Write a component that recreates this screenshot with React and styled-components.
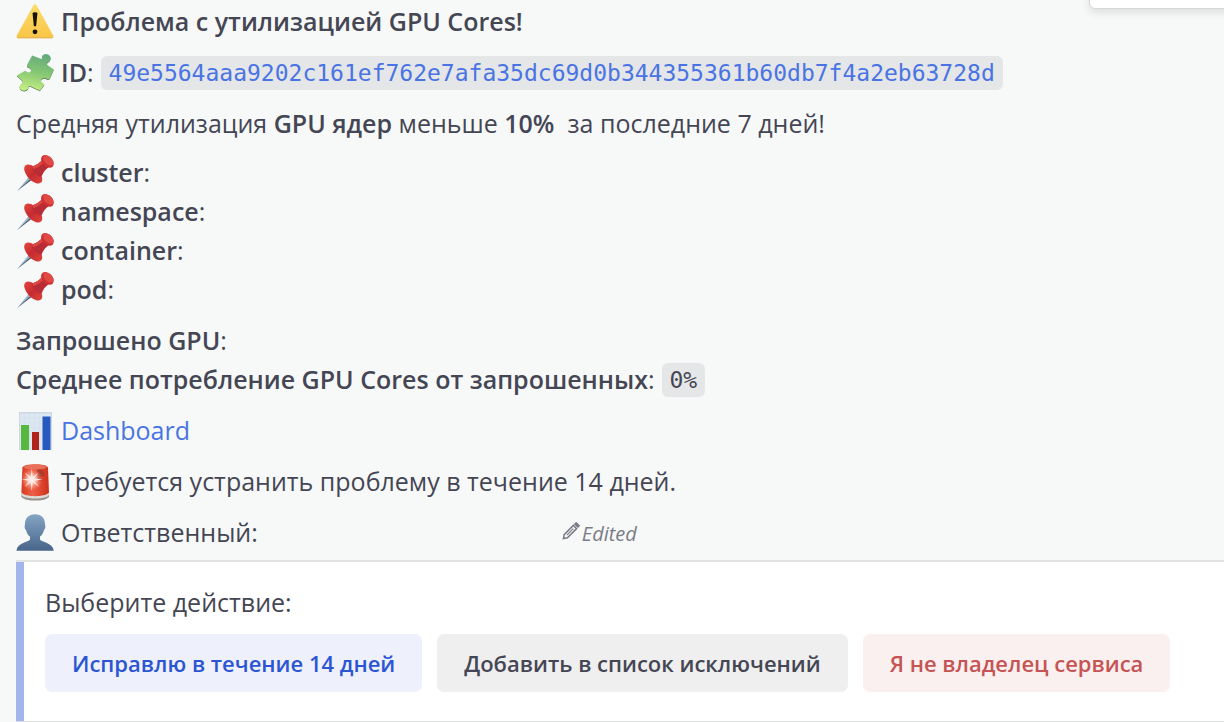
import React from 'react';
import styled, { createGlobalStyle } from 'styled-components';

const GlobalStyles = createGlobalStyle`
  * {
    margin: 0;
    padding: 0;
    box-sizing: border-box;
  }

  body {
    background-color: #f7f9f9;
    color: #454654;
    font-family: 'Open Sans', sans-serif;
    font-size: 25px;
    line-height: 39px;
  }
`;

const Post = styled.main`
  position: relative;
  min-height: 100vh;
  padding: 2px 0 0 16px;
  overflow: hidden;
`;

const HoverMenu = styled.div`
  position: absolute;
  top: -40px;
  right: -20px;
  width: 155px;
  height: 49px;
  background-color: #ffffff;
  border: 1px solid #d6d8d9;
  border-radius: 6px;
  box-shadow: 0 4px 8px rgba(0, 0, 0, 0.1);
`;

const Message = styled.div`
  display: flex;
  flex-direction: column;
  gap: 12px;
  margin-bottom: 8px;
`;

const Line = styled.p`
  display: flex;
  align-items: center;
  white-space: pre;
`;

const Labels = styled.div`
  margin-top: -2px;
`;

const Title = styled(Line).attrs({ as: 'h1' })`
  font-size: 25px;
  font-weight: 600;
`;

const Bold = styled.strong`
  font-weight: 600;
`;

const Icon = styled.svg`
  flex: none;
  width: 38px;
  height: 38px;
  margin-right: 7px;
`;

const Code = styled.code`
  padding: 0 8px;
  margin-left: 7px;
  border-radius: 6px;
  background-color: #e4e6e7;
  color: ${({ $link }) => ($link ? '#4a74e4' : '#454654')};
  font-family: 'DejaVu Sans Mono', monospace;
  font-size: 23px;
  line-height: 34px;
`;

const TextLink = styled.a`
  color: #4a74e4;
  text-decoration: none;
`;

const Edited = styled.span`
  display: flex;
  align-items: center;
  gap: 2px;
  margin-left: 304px;
  padding-top: 2px;
  color: #7b7c86;
  font-size: 20px;
  font-style: italic;
  line-height: 37px;
`;

const Pencil = styled.svg`
  width: 18px;
  height: 18px;
  margin-bottom: 5px;
`;

const Attachment = styled.section`
  border-top: 2px solid #e1e3e3;
  border-bottom: 1px solid #dcdddd;
  background-color: #ffffff;
`;

const AttachmentBody = styled.div`
  padding: 21px 21px 29px;
  border-left: 8px solid #a2b6ec;
`;

const Actions = styled.div`
  display: flex;
  gap: 15px;
  margin-top: 12px;
`;

const tones = {
  primary: { color: '#2c55d3', background: '#eef1fb' },
  plain: { color: '#454654', background: '#efefef' },
  danger: { color: '#c65454', background: '#faf0f0' },
};

const ActionButton = styled.button`
  height: 58px;
  padding: 0 27px;
  border: none;
  border-radius: 7px;
  background-color: ${({ $tone }) => tones[$tone].background};
  color: ${({ $tone }) => tones[$tone].color};
  font-family: inherit;
  font-size: 22px;
  font-weight: 600;
  white-space: nowrap;
  cursor: pointer;
`;

const WarningIcon = () => (
  <Icon viewBox="0 0 38 38" aria-hidden="true">
    <defs>
      <linearGradient id="warn" x1="0" y1="0" x2="0" y2="1">
        <stop offset="0" stopColor="#fbdc6a" />
        <stop offset="1" stopColor="#f9c646" />
      </linearGradient>
    </defs>
    <path d="M17.3 2.4Q19 0.2 20.7 2.4L37.2 32.4Q38 35.2 35.4 35.2H2.6Q0 35.2 0.8 32.4Z" fill="url(#warn)" />
    <path d="M0.9 34Q1.3 35.2 2.6 35.2H35.4Q36.7 35.2 37.1 34Z" fill="#eab453" />
    <path d="M16.6 10.4Q16.6 9.2 19 9.2T21.4 10.4L20.2 22.8Q19 24.4 17.8 22.8Z" fill="#171308" />
    <circle cx="19" cy="28.8" r="2.4" fill="#171308" />
  </Icon>
);

const puzzlePath =
  'M0.8 21.4L7.8 17.4C9.4 16.4 10.2 17.2 11.2 18C13 19.4 15.8 17.6 15 15.2C14.4 13.4 13 13.6 11.8 13C10.6 12.2 11 10.8 11.8 9.4L16.2 1.6L24 4.6C26.2 5.4 26.2 4.2 26 2.8C26.6 -0.8 33 -1 34.4 3C35.2 6.2 32.8 7.6 31.2 8.6C30.2 9.6 31 10.6 32 11.4L37.8 15.4L34 24C33.2 25.6 31.8 25.6 30.6 24.6C28.2 22.8 24.6 24.6 25 27.2C25.4 28.8 26.6 28.8 27.6 29.4C28.6 30.2 28.2 31 27.6 31.8L23.8 36.4L15 32.4C13.4 31.6 12.4 32 12.4 33.6C11.8 37.4 5.2 37.8 3.8 34C3 31.2 5 29.8 6.2 29C7.2 28.2 6.8 27.2 6 26.2Z';

const PuzzleIcon = () => (
  <Icon viewBox="0 0 38 38" aria-hidden="true">
    <defs>
      <linearGradient id="puzzle" x1="0.6" y1="0" x2="0.4" y2="1">
        <stop offset="0" stopColor="#63ab7b" />
        <stop offset="0.5" stopColor="#86c774" />
        <stop offset="1" stopColor="#c3ee82" />
      </linearGradient>
    </defs>
    <path d={puzzlePath} fill="#5f7d58" transform="translate(0 0.8)" />
    <path d={puzzlePath} fill="url(#puzzle)" />
  </Icon>
);

const PinIcon = () => (
  <Icon viewBox="0 0 38 38" aria-hidden="true">
    <defs>
      <linearGradient id="pin" x1="0" y1="0" x2="0" y2="1">
        <stop offset="0" stopColor="#e2433e" />
        <stop offset="0.5" stopColor="#c52c30" />
        <stop offset="1" stopColor="#dc4039" />
      </linearGradient>
    </defs>
    <path d="M1.2 37L12.2 23.4L15 26.2Z" fill="#9db6cd" />
    <path d="M1.2 37L14 25.2L15 26.2Z" fill="#4b5763" />
    <ellipse cx="17.2" cy="20" rx="6.2" ry="11.6" transform="rotate(-42 17.2 20)" fill="url(#pin)" />
    <path d="M15.6 12.6C20 11.4 23.4 9 26.6 5.4L33.6 12.6C29.4 15.4 27 18.6 25.6 22.6C21.6 22.8 15.6 17 15.6 12.6Z" fill="#b92c36" />
    <path d="M15.8 12.6C20 11.4 23.4 9 26.6 5.4L29 7.8C25.4 11 22 13.6 17.6 15.2Z" fill="#dc4742" />
    <ellipse cx="31.4" cy="7.4" rx="5" ry="7.4" transform="rotate(-45 31.4 7.4)" fill="#cf3133" />
    <ellipse cx="32.4" cy="6.4" rx="3.8" ry="6.2" transform="rotate(-45 32.4 6.4)" fill="#e04a45" />
  </Icon>
);

const ChartIcon = () => (
  <Icon viewBox="0 0 38 38" aria-hidden="true">
    <rect x="3" y="0" width="33" height="38" fill="#cfd8e2" />
    <rect x="4" y="1.5" width="31" height="36.5" fill="#dce7f2" />
    <path d="M8.5 1V38M13.5 1V38M18.5 1V38M23.5 1V38M28.5 1V38M4 6H35M4 11H35M4 16H35M4 21H35M4 26H35" stroke="#d0dcea" strokeWidth="0.5" />
    <rect x="5" y="13" width="8" height="25" fill="#55b93e" />
    <rect x="16" y="20" width="7" height="18" fill="#b2241b" />
    <rect x="26.5" y="4.5" width="8" height="33.5" fill="#265abf" />
  </Icon>
);

const SirenIcon = () => (
  <Icon viewBox="0 0 38 38" aria-hidden="true">
    <defs>
      <linearGradient id="siren" x1="0" y1="0" x2="1" y2="0">
        <stop offset="0" stopColor="#d63a22" />
        <stop offset="0.4" stopColor="#ee5f46" />
        <stop offset="1" stopColor="#cf2f1b" />
      </linearGradient>
      <radialGradient id="flare">
        <stop offset="0" stopColor="#ffffff" />
        <stop offset="0.35" stopColor="#ffd8cd" stopOpacity="0.8" />
        <stop offset="1" stopColor="#ff8b70" stopOpacity="0" />
      </radialGradient>
    </defs>
    <path d="M5.4 30H33V33.4C31 39 7.4 39 5.4 33.4Z" fill="#96938d" />
    <path d="M5.4 30H33V31.8C31 36.8 7.4 36.8 5.4 31.8Z" fill="#dddbd5" />
    <path d="M6.4 4.6C7 0 31.4 0 32 4.6L33 29.6C30 34.4 8.4 34.4 5.4 29.6Z" fill="url(#siren)" />
    <ellipse cx="19.2" cy="4" rx="11.6" ry="2.6" fill="#e86f59" />
    <path d="M21 7C26 5.5 29 8 28.5 12.6L24 14.5L27 17L22 19Z" fill="#b03a2b" />
    <circle cx="15.8" cy="16.6" r="11" fill="url(#flare)" />
    <path d="M15.8 5.6L16.8 14L22.6 9.6L18.2 15.6L27 16.6L18.2 17.8L23.4 24L16.8 19.2L15.8 28L14.6 19.2L8.6 24L13.2 17.8L5.6 16.6L13.2 15.4L8.6 9.2L14.6 14Z" fill="#ffeee9" fillOpacity="0.9" />
  </Icon>
);

const PersonIcon = () => (
  <Icon viewBox="0 0 38 38" aria-hidden="true">
    <defs>
      <linearGradient id="person" x1="0" y1="0" x2="0" y2="1">
        <stop offset="0" stopColor="#85a5c4" />
        <stop offset="1" stopColor="#48658a" />
      </linearGradient>
    </defs>
    <path d="M19 0.2C25.6 0.2 29.4 4.6 29 11C29.8 11.6 29.4 15 28 16C27.4 19 25.8 21.2 24 22.6V25.6C25.6 28.6 36.4 28.2 37.8 36.8H0.4C1.8 28.2 12.4 28.6 14 25.6V22.6C12.2 21.2 10.6 19 10 16C8.6 15 8.2 11.6 9 11C8.6 4.6 12.4 0.2 19 0.2Z" fill="url(#person)" />
  </Icon>
);

const labels = ['cluster', 'namespace', 'container', 'pod'];

const App = () => {
  return (
    <>
      <GlobalStyles />
      <Post>
        <HoverMenu />
        <Message>
          <Title>
            <WarningIcon />
            Проблема с утилизацией GPU Cores!
          </Title>
          <Line>
            <PuzzleIcon />
            <Bold>ID</Bold>:
            <Code $link>49e5564aaa9202c161ef762e7afa35dc69d0b344355361b60db7f4a2eb63728d</Code>
          </Line>
          <Line>
            Средняя утилизация <Bold>GPU ядер</Bold> меньше <Bold>10%</Bold>
            {'  за последние 7 дней!'}
          </Line>
          <Labels>
            {labels.map((label) => (
              <Line key={label}>
                <PinIcon />
                <Bold>{label}</Bold>:
              </Line>
            ))}
          </Labels>
          <div>
            <Line>
              <Bold>Запрошено GPU</Bold>:
            </Line>
            <Line>
              <Bold>Среднее потребление GPU Cores от запрошенных</Bold>:
              <Code>0%</Code>
            </Line>
          </div>
          <Line>
            <ChartIcon />
            <TextLink href="#dashboard">Dashboard</TextLink>
          </Line>
          <Line>
            <SirenIcon />
            Требуется устранить проблему в течение 14 дней.
          </Line>
          <Line>
            <PersonIcon />
            Ответственный:
            <Edited>
              <Pencil viewBox="0 0 20 20" fill="none" stroke="#7b7c86" strokeWidth="1.7" aria-hidden="true">
                <path d="M1.6 18.4L2.4 14L12.6 3.8L16.2 7.4L6 17.6Z" />
                <path d="M5.4 14.6L12.6 7.4" strokeWidth="1.2" />
                <path d="M14.4 2.4L15.8 1L19 4.2L17.6 5.6Z" fill="#7b7c86" />
              </Pencil>
              Edited
            </Edited>
          </Line>
        </Message>
        <Attachment>
          <AttachmentBody>
            <p>Выберите действие:</p>
            <Actions>
              <ActionButton type="button" $tone="primary">Исправлю в течение 14 дней</ActionButton>
              <ActionButton type="button" $tone="plain">Добавить в список исключений</ActionButton>
              <ActionButton type="button" $tone="danger">Я не владелец сервиса</ActionButton>
            </Actions>
          </AttachmentBody>
        </Attachment>
      </Post>
    </>
  );
};

export default App;
